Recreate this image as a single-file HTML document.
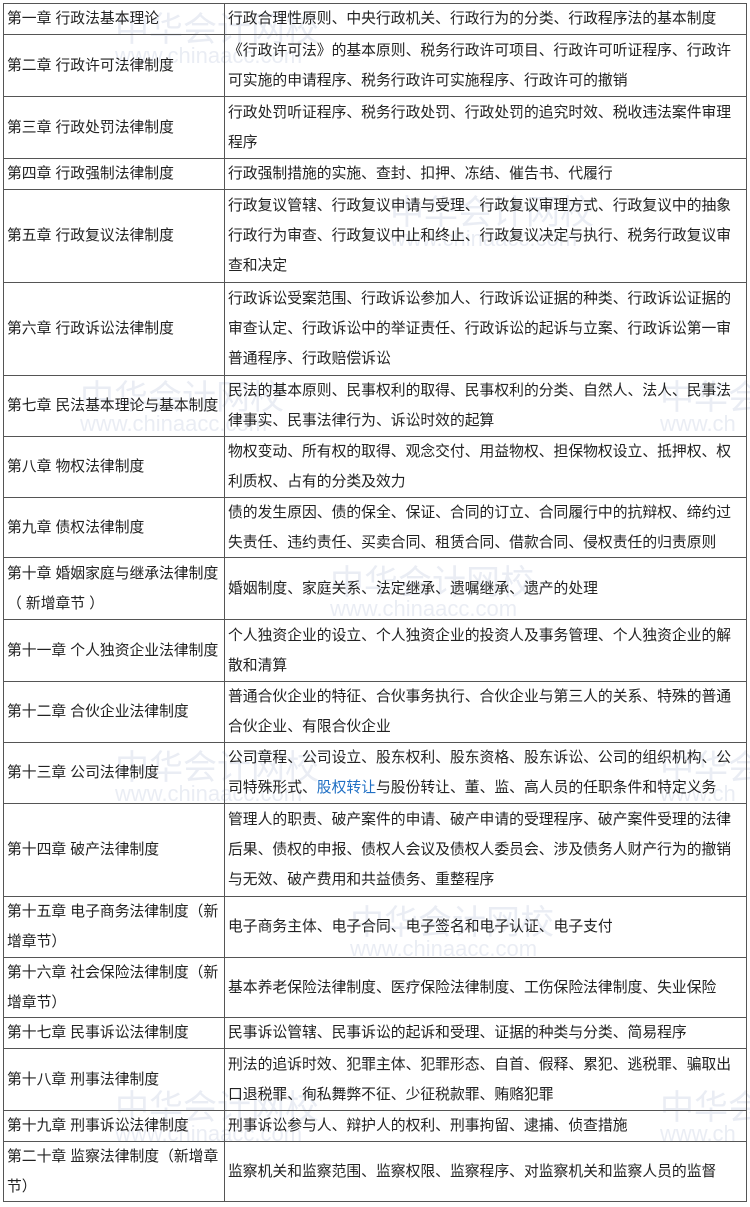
<!DOCTYPE html>
<html><head><meta charset="utf-8"><style>
body{margin:0;background:#fff;width:750px;height:1207px;overflow:hidden;position:relative;font-family:"Liberation Sans","Noto Sans CJK SC",sans-serif;font-size:14.8px;color:#222}
.r{position:absolute;left:3px;width:744px;border-top:1px solid #555;display:flex;box-sizing:border-box}
.a{width:222px;flex:none;border-left:1px solid #555;border-right:1px solid #555;display:flex;align-items:center;padding-left:3px;line-height:30px;box-sizing:border-box;white-space:nowrap}
.b{flex:1;border-right:1px solid #555;display:flex;align-items:center;padding-left:3px;line-height:30px;white-space:nowrap;overflow:hidden}
.bot{position:absolute;left:3px;width:744px;top:1201px;border-top:1px solid #555}
.bl{color:#1f6fc4}
.wm{position:absolute;color:rgba(170,185,210,.25);font-size:34px;white-space:nowrap;pointer-events:none}
.wm span{display:block;font-size:22px;margin-top:-8px}
</style></head><body>
<div class="wm" style="left:115px;top:2px">中华会计网校<span>www.chinaacc.com</span></div>
<div class="wm" style="left:390px;top:185px">中华会计网校<span>www.chinaacc.com</span></div>
<div class="wm" style="left:80px;top:370px">中华会计网校<span>www.chinaacc.com</span></div>
<div class="wm" style="left:330px;top:555px">中华会计网校<span>www.chinaacc.com</span></div>
<div class="wm" style="left:660px;top:370px">中华会<span>www.ch</span></div>
<div class="wm" style="left:115px;top:740px">中华会计网校<span>www.chinaacc.com</span></div>
<div class="wm" style="left:660px;top:740px">中华会<span>www.ch</span></div>
<div class="wm" style="left:350px;top:895px">中华会计网校<span>www.chinaacc.com</span></div>
<div class="wm" style="left:115px;top:1080px">中华会计网校<span>www.chinaacc.com</span></div>
<div class="wm" style="left:660px;top:1080px">中华会<span>www.ch</span></div>

<div class="r" style="top:3px;height:31px"><div class="a"><div>第一章 行政法基本理论</div></div><div class="b"><div>行政合理性原则、中央行政机关、行政行为的分类、行政程序法的基本制度</div></div></div>
<div class="r" style="top:34px;height:62px"><div class="a"><div>第二章 行政许可法律制度</div></div><div class="b"><div>《行政许可法》的基本原则、税务行政许可项目、行政许可听证程序、行政许<br>可实施的申请程序、税务行政许可实施程序、行政许可的撤销</div></div></div>
<div class="r" style="top:96px;height:62px"><div class="a"><div>第三章 行政处罚法律制度</div></div><div class="b"><div>行政处罚听证程序、税务行政处罚、行政处罚的追究时效、税收违法案件审理<br>程序</div></div></div>
<div class="r" style="top:158px;height:31px"><div class="a"><div>第四章 行政强制法律制度</div></div><div class="b"><div>行政强制措施的实施、查封、扣押、冻结、催告书、代履行</div></div></div>
<div class="r" style="top:189px;height:93px"><div class="a"><div>第五章 行政复议法律制度</div></div><div class="b"><div>行政复议管辖、行政复议申请与受理、行政复议审理方式、行政复议中的抽象<br>行政行为审查、行政复议中止和终止、行政复议决定与执行、税务行政复议审<br>查和决定</div></div></div>
<div class="r" style="top:282px;height:93px"><div class="a"><div>第六章 行政诉讼法律制度</div></div><div class="b"><div>行政诉讼受案范围、行政诉讼参加人、行政诉讼证据的种类、行政诉讼证据的<br>审查认定、行政诉讼中的举证责任、行政诉讼的起诉与立案、行政诉讼第一审<br>普通程序、行政赔偿诉讼</div></div></div>
<div class="r" style="top:375px;height:61px"><div class="a"><div>第七章 民法基本理论与基本制度</div></div><div class="b"><div>民法的基本原则、民事权利的取得、民事权利的分类、自然人、法人、民事法<br>律事实、民事法律行为、诉讼时效的起算</div></div></div>
<div class="r" style="top:436px;height:61px"><div class="a"><div>第八章 物权法律制度</div></div><div class="b"><div>物权变动、所有权的取得、观念交付、用益物权、担保物权设立、抵押权、权<br>利质权、占有的分类及效力</div></div></div>
<div class="r" style="top:497px;height:60px"><div class="a"><div>第九章 债权法律制度</div></div><div class="b"><div>债的发生原因、债的保全、保证、合同的订立、合同履行中的抗辩权、缔约过<br>失责任、违约责任、买卖合同、租赁合同、借款合同、侵权责任的归责原则</div></div></div>
<div class="r" style="top:557px;height:62px"><div class="a"><div>第十章 婚姻家庭与继承法律制度<br>（ 新增章节 ）</div></div><div class="b"><div>婚姻制度、家庭关系、法定继承、遗嘱继承、遗产的处理</div></div></div>
<div class="r" style="top:619px;height:62px"><div class="a"><div>第十一章 个人独资企业法律制度</div></div><div class="b"><div>个人独资企业的设立、个人独资企业的投资人及事务管理、个人独资企业的解<br>散和清算</div></div></div>
<div class="r" style="top:681px;height:61px"><div class="a"><div>第十二章 合伙企业法律制度</div></div><div class="b"><div>普通合伙企业的特征、合伙事务执行、合伙企业与第三人的关系、特殊的普通<br>合伙企业、有限合伙企业</div></div></div>
<div class="r" style="top:742px;height:61px"><div class="a"><div>第十三章 公司法律制度</div></div><div class="b"><div>公司章程、公司设立、股东权利、股东资格、股东诉讼、公司的组织机构、公<br>司特殊形式、<span class="bl">股权转让</span>与股份转让、董、监、高人员的任职条件和特定义务</div></div></div>
<div class="r" style="top:803px;height:93px"><div class="a"><div>第十四章 破产法律制度</div></div><div class="b"><div>管理人的职责、破产案件的申请、破产申请的受理程序、破产案件受理的法律<br>后果、债权的申报、债权人会议及债权人委员会、涉及债务人财产行为的撤销<br>与无效、破产费用和共益债务、重整程序</div></div></div>
<div class="r" style="top:896px;height:61px"><div class="a"><div>第十五章 电子商务法律制度（新<br>增章节）</div></div><div class="b"><div>电子商务主体、电子合同、电子签名和电子认证、电子支付</div></div></div>
<div class="r" style="top:957px;height:60px"><div class="a"><div>第十六章 社会保险法律制度（新<br>增章节）</div></div><div class="b"><div>基本养老保险法律制度、医疗保险法律制度、工伤保险法律制度、失业保险</div></div></div>
<div class="r" style="top:1017px;height:31px"><div class="a"><div>第十七章 民事诉讼法律制度</div></div><div class="b"><div>民事诉讼管辖、民事诉讼的起诉和受理、证据的种类与分类、简易程序</div></div></div>
<div class="r" style="top:1048px;height:62px"><div class="a"><div>第十八章 刑事法律制度</div></div><div class="b"><div>刑法的追诉时效、犯罪主体、犯罪形态、自首、假释、累犯、逃税罪、骗取出<br>口退税罪、徇私舞弊不征、少征税款罪、贿赂犯罪</div></div></div>
<div class="r" style="top:1110px;height:31px"><div class="a"><div>第十九章 刑事诉讼法律制度</div></div><div class="b"><div>刑事诉讼参与人、辩护人的权利、刑事拘留、逮捕、侦查措施</div></div></div>
<div class="r" style="top:1141px;height:60px"><div class="a"><div>第二十章 监察法律制度（新增章<br>节）</div></div><div class="b"><div>监察机关和监察范围、监察权限、监察程序、对监察机关和监察人员的监督</div></div></div>
<div class="bot"></div>
</body></html>
